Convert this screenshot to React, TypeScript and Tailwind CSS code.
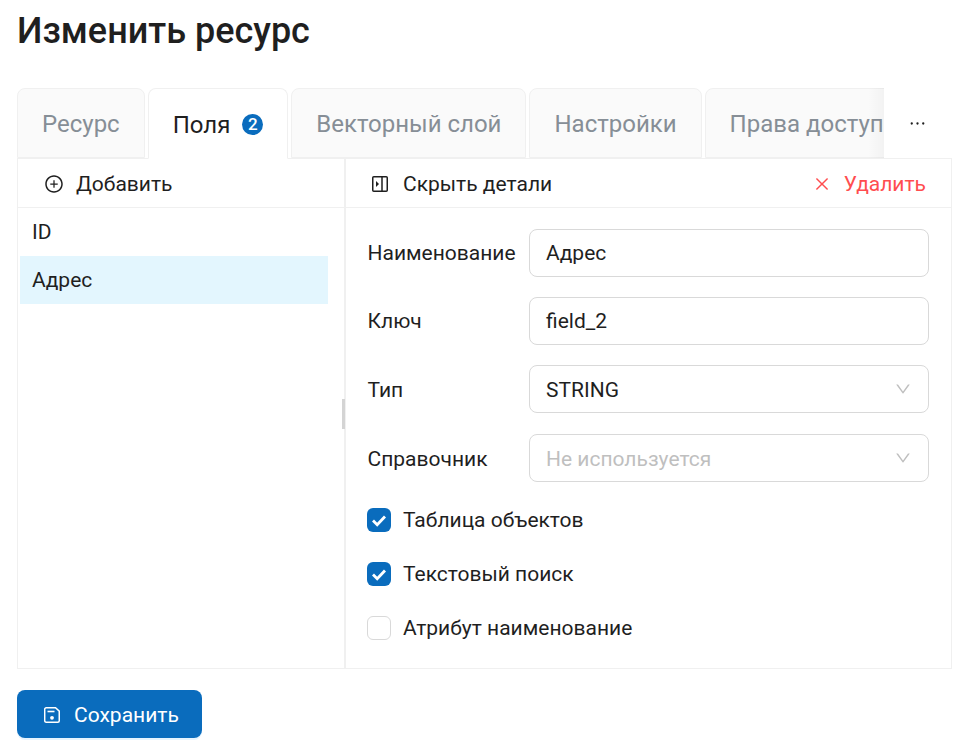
import { AiOutlinePlusCircle, AiOutlineClose, AiOutlineEllipsis, AiOutlineDown } from 'react-icons/ai'

const tabs = [
  { label: 'Ресурс' },
  { label: 'Поля', active: true, badge: 2 },
  { label: 'Векторный слой' },
  { label: 'Настройки' },
  { label: 'Права доступа' },
]

function PanelIcon() {
  return (
    <svg width="16" height="16" viewBox="0 0 16 16" fill="none" className="shrink-0">
      <rect x="0.75" y="0.75" width="14.5" height="14.5" rx="1" stroke="#1f1f1f" strokeWidth="1.5" />
      <path d="M10 1v14" stroke="#1f1f1f" strokeWidth="1.5" />
      <path d="M4 5 7 8l-3 3z" fill="#1f1f1f" />
    </svg>
  )
}

function SaveIcon() {
  return (
    <svg width="16" height="16" viewBox="0 0 16 16" fill="none" className="shrink-0">
      <path d="M2.2.75h9.3l3.75 3.4v9.6a1.5 1.5 0 0 1-1.5 1.5H2.2a1.5 1.5 0 0 1-1.5-1.5V2.25A1.5 1.5 0 0 1 2.2.75z" stroke="white" strokeWidth="1.5" />
      <path d="M3.5 4.5h7" stroke="white" strokeWidth="1.6" />
      <circle cx="8" cy="10.8" r="1.9" fill="white" />
    </svg>
  )
}

function Field({ label, value, select, placeholder }: { label: string; value: string; select?: boolean; placeholder?: boolean }) {
  return (
    <div className="flex items-center h-[48px]">
      <div className={`w-[161px] text-[#1f1f1f] ${select ? 'pt-[2px]' : ''}`}>{label}</div>
      <div className="w-[400px] h-[48px] border border-[#d9d9d9] rounded-[8px] pl-[16.5px] pr-[16px] flex items-center justify-between">
        <span className={`${placeholder ? 'text-[#bfbfbf]' : 'text-[#1f1f1f]'} ${select ? 'pt-[2px]' : ''}`}>{value}</span>
        {select && <AiOutlineDown className="text-[#bfbfbf]" size={18} />}
      </div>
    </div>
  )
}

function Check({ label, checked }: { label: string; checked?: boolean }) {
  return (
    <div className="flex items-center gap-[12px] h-[24px]">
      <div
        className={`w-[24px] h-[24px] rounded-[6px] flex items-center justify-center ${
          checked ? 'bg-[#0a6cbd]' : 'border border-[#d9d9d9] bg-white'
        }`}
      >
        {checked && (
          <svg width="24" height="24" viewBox="0 0 24 24" fill="none">
            <path d="M6 12.5l4.2 4.2L18 8.5" stroke="white" strokeWidth="2.8" />
          </svg>
        )}
      </div>
      <span className="text-[#1f1f1f]">{label}</span>
    </div>
  )
}

export default function App() {
  return (
    <div className="w-[967px] h-[746px] overflow-hidden bg-white pl-[17px] pr-[15px] text-[21px] leading-[28px] font-['Roboto',sans-serif]">
      <h1 className="text-[36px] leading-[40px] font-medium text-[#1f1f1f] pt-[11px] h-[88px]">Изменить ресурс</h1>

      {/* Tabs */}
      <div className="flex h-[71px] relative z-10">
        <div className="relative w-[867px] flex gap-[3px] overflow-hidden text-[24px]">
          {tabs.map((tab) => (
            <div
              key={tab.label}
              className={`shrink-0 rounded-t-[8px] border border-[#f0f0f0] pt-[2px] px-[24px] flex items-center gap-[12px] ${
                tab.active ? 'h-[71px] bg-white border-b-white text-[#1f1f1f]' : 'h-[70px] bg-[#fafafa] text-[#868e96]'
              }`}
            >
              {tab.label}
              {tab.badge && (
                <span className="w-[21px] h-[21px] rounded-full bg-[#0a6cbd] text-white text-[17px] leading-[21px] font-medium text-center">
                  {tab.badge}
                </span>
              )}
            </div>
          ))}
          <div className="absolute right-0 top-0 w-[16px] h-[70px] bg-gradient-to-r from-transparent to-black/[0.03]" />
        </div>
        <div className="w-[67px] h-[70px] flex items-center justify-center">
          <AiOutlineEllipsis className="text-[#1f1f1f]" size={21} />
        </div>
      </div>

      {/* Body */}
      <div className="flex w-[935px] h-[511px] -mt-px border border-[#f0f0f0]">
        <div className="w-[326px] shrink-0">
          <div className="h-[49px] border-b border-[#f0f0f0] flex items-center pt-[1px] pl-[26px] gap-[12px] text-[#1f1f1f]">
            <AiOutlinePlusCircle size={20} />
            Добавить
          </div>
          <div className="pl-[2px] pr-[16px]">
            <div className="h-[48px] flex items-center pl-[12px] text-[#1f1f1f]">ID</div>
            <div className="h-[48px] flex items-center pl-[12px] bg-[#e3f6fe] text-[#1f1f1f]">Адрес</div>
          </div>
        </div>

        <div className="relative w-[2px] shrink-0 bg-[#f0f0f0]">
          <div className="absolute left-[-2px] top-[240px] w-[3px] h-[30px] bg-[#d4d4d4]" />
        </div>

        <div className="flex-1">
          <div className="h-[49px] border-b border-[#f0f0f0] flex items-center justify-between pt-[1px] pl-[26px] pr-[25px]">
            <div className="flex items-center gap-[15px] text-[#1f1f1f]">
              <PanelIcon />
              Скрыть детали
            </div>
            <div className="flex items-center gap-[13px] text-[#ff4d4f]">
              <AiOutlineClose size={18} />
              Удалить
            </div>
          </div>
          <div className="pl-[21.5px] pt-[21px] flex flex-col gap-[20.2px]">
            <Field label="Наименование" value="Адрес" />
            <Field label="Ключ" value="field_2" />
            <Field label="Тип" value="STRING" select />
            <Field label="Справочник" value="Не используется" select placeholder />
          </div>
          <div className="pl-[21px] pt-[26.5px] flex flex-col gap-[30px]">
            <Check label="Таблица объектов" checked />
            <Check label="Текстовый поиск" checked />
            <Check label="Атрибут наименование" />
          </div>
        </div>
      </div>

      <button className="mt-[21px] w-[185px] h-[48px] pt-[1px] pl-[27px] rounded-[8px] bg-[#0a6cbd] text-white flex items-center gap-[14px] shadow-[0_2px_0_rgba(5,145,255,0.1)]">
        <SaveIcon />
        Сохранить
      </button>
    </div>
  )
}
